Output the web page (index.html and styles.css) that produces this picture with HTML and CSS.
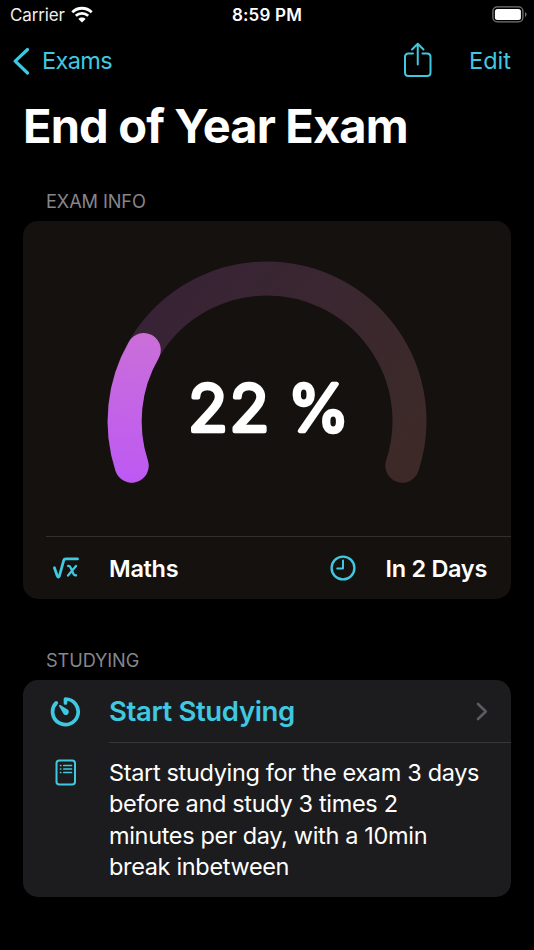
FILE: index.html
```html
<!DOCTYPE html>
<html lang="en">
<head>
<meta charset="utf-8">
<title>End of Year Exam</title>
<link rel="stylesheet" href="styles.css">
</head>
<body>
<header class="status">
  <div class="carrier"><span>Carrier</span>
    <svg width="22" height="17" viewBox="0 0 22 17" fill="none" stroke="#fff" stroke-width="2.8"><path d="M1.300 6.200C6.800.9 15.200.9 20.700 6.200M4.800 9.800c3.500-3.200 8.900-3.200 12.400 0"/><path fill="#fff" stroke="none" d="M7.400 12.900c2-1.800 5.200-1.800 7.200 0L11 16.500z"/></svg>
  </div>
  <span class="time">8:59 PM</span>
  <svg class="battery" width="35" height="17" viewBox="0 0 35 17"><rect x=".9" y=".9" width="30" height="15" rx="4.300" fill="none" stroke="#77777a" stroke-width="1.300"/><rect x="2.900" y="2.900" width="26" height="11" rx="2.500" fill="#fff"/><path d="M33 6v5q1.500-.7 1.500-2.500T33 6z" fill="#77777a"/></svg>
</header>
<nav class="nav">
  <a class="back"><svg width="18" height="28" viewBox="0 0 18 28" fill="none" stroke="currentColor" stroke-width="3.200" stroke-linecap="round" stroke-linejoin="round"><path d="M16.500 2.500 4.200 14.200 16.500 26"/></svg><span>Exams</span></a>
  <svg class="share" width="30" height="36" viewBox="0 0 30 36" fill="none" stroke="currentColor" stroke-width="2" stroke-linecap="round" stroke-linejoin="round"><path d="M10 11.500H5.500Q2 11.500 2 15V30.500Q2 34 5.500 34H24Q27.500 34 27.500 30.500V15Q27.500 11.500 24 11.500H19.500M14.750 22.500V2M9 7.500 14.750 1.800 20.500 7.500"/></svg>
  <a class="edit">Edit</a>
</nav>
<main>
  <h1>End of Year Exam</h1>
  <h2>EXAM INFO</h2>
  <section class="card info">
    <svg class="gauge" width="488" height="315" viewBox="23 221 488 315">
      <defs>
        <linearGradient id="track" gradientUnits="userSpaceOnUse" x1="130" y1="300" x2="410" y2="480"><stop stop-color="#372236"/><stop offset=".5" stop-color="#3a2730"/><stop offset="1" stop-color="#3d2a27"/></linearGradient>
        <linearGradient id="value" gradientUnits="userSpaceOnUse" x1="125" y1="482" x2="150" y2="334"><stop stop-color="#bd59f3"/><stop offset="1" stop-color="#ca6fd9"/></linearGradient>
      </defs>
      <g fill="none" stroke-width="34" stroke-linecap="round">
        <path stroke="url(#track)" d="M131.700 465.700A142.500 142.500 0 1 1 402.300 465.700"/>
        <path stroke="url(#value)" d="M131.700 465.700A142.500 142.500 0 0 1 143.800 350"/>
      </g>
      <text class="percent" x="188" y="430.500">22<tspan dx="-3"> %</tspan></text>
    </svg>
    <div class="facts">
      <svg class="root" width="28" height="24" viewBox="0 0 28 24" fill="none" stroke="currentColor" stroke-linecap="round" stroke-linejoin="round"><path stroke-width="2.800" d="M2.400 11.700 5.300 20Q6.300 22.300 7.400 20L11.700 4.300Q12.100 2.900 13.800 2.900H25.500"/><path stroke-width="2.300" d="M16 10Q17.500 9.500 18.500 11.500L21.500 18Q22.500 19.800 24 19.300M24 10 16 19.500"/></svg>
      <span class="subject">Maths</span>
      <svg class="clock" width="26" height="26" viewBox="0 0 26 26" fill="none" stroke="currentColor"><circle cx="13" cy="13" r="11.400" stroke-width="2.400"/><path stroke-width="2" stroke-linecap="round" stroke-linejoin="round" d="M13 5.500V13.500H7.200"/></svg>
      <span class="due">In 2 Days</span>
    </div>
  </section>
  <h2 class="second">STUDYING</h2>
  <section class="card study">
    <div class="start">
      <svg class="timer" width="31" height="31" viewBox="0 0 31 31" fill="none" stroke="currentColor" stroke-width="3.700" stroke-linecap="round" stroke-linejoin="round"><path d="M15.500 7V3A12.800 12.800 0 1 1 6.200 6.900"/><path fill="currentColor" stroke="none" d="M9.500 9.100Q8.700 9.500 9.100 10.200L13 17A3 3 0 1 0 17.600 13.600L10.300 9Q9.900 8.800 9.500 9.100z"/></svg>
      <span class="start-label">Start Studying</span>
      <svg class="chevron" width="12" height="19" viewBox="0 0 12 19" fill="none" stroke="#5b5b60" stroke-width="2.600" stroke-linecap="round" stroke-linejoin="round"><path d="M2 2 9.800 9.500 2 17"/></svg>
    </div>
    <div class="plan">
      <svg class="note" width="22" height="27" viewBox="0 0 22 27" fill="none" stroke="currentColor" stroke-linecap="round"><rect x="1.500" y="1.500" width="18.500" height="24" rx="2.800" stroke-width="2"/><path stroke-width="1.700" d="M8.800 6.500H16.500M8.800 10H16.500M8.800 13.500H16.500M5.500 6.500H5.800M5.500 10H5.800M5.500 13.500H5.800"/></svg>
      <p>Start studying for the exam 3 days<br>before and study 3 times 2<br>minutes per day, with a 10min<br>break inbetween</p>
    </div>
  </section>
</main>
</body>
</html>
```

FILE: styles.css
```css
* { box-sizing: border-box; }
body { margin: 0; width: 534px; height: 950px; overflow: hidden; background: #000; color: #fff; font-family: Inter, sans-serif; }
svg { display: block; flex: none; }
span, a, h1, h2, p { white-space: nowrap; }
.status { display: grid; grid-template-columns: 1fr auto 1fr; height: 30px; padding: 0 10px; align-items: center; font-size: 17px; line-height: 30px; }
.carrier { display: flex; gap: 7px; align-items: center; color: #eee; letter-spacing: -.15px; }
.carrier svg { margin: -2px 0 0 -1px; }
.time { font-weight: 600; letter-spacing: .2px; }
.battery { justify-self: end; margin: -2px -3px 0 0; }
.nav { display: flex; align-items: center; height: 61px; padding: 0 23px 0 11px; color: #40c8e0; font-size: 23.500px; line-height: 30px; }
.back { display: flex; gap: 13px; align-items: center; letter-spacing: -.65px; }
.share { margin: -1px 36px 0 auto; }
main { padding: 0 23px; }
h1 { margin: 7px 0 0; height: 56px; font-size: 47px; line-height: 56px; font-weight: 700; letter-spacing: -.85px; }
h2 { margin: 37px 0 0 23px; height: 30px; font-size: 18.200px; line-height: 20px; font-weight: 400; letter-spacing: -.1px; color: #86868b; }
h2.second { margin-top: 51px; }
.card { border-radius: 15px; overflow: hidden; }
.info { height: 378px; background: #14110e; }
.percent { font-size: 65px; font-weight: 300; letter-spacing: 1.600px; fill: #fff; stroke: #fff; stroke-width: 4.500px; stroke-linejoin: round; }
.facts { display: flex; align-items: center; margin-left: 23px; height: 63px; padding-right: 24px; border-top: 1px solid #322f2d; font-size: 23.500px; font-weight: 600; letter-spacing: -.3px; }
.root, .clock { color: #40c8e0; }
.root { margin-left: 6px; }
.subject { margin-left: 29px; }
.clock { margin-left: auto; }
.due { margin-left: 30px; }
.study { height: 217px; background: #1c1c1e; }
.start, .plan { display: grid; grid-template-columns: 86px 1fr auto; }
.start { height: 62px; align-items: center; color: #40c8e0; }
.timer { margin: 1px 0 0 27px; }
.start-label { font-size: 27.500px; font-weight: 600; letter-spacing: -.35px; }
.chevron { margin-right: 23px; }
.plan { position: relative; padding-top: 15px; }
.plan::before { content: ""; position: absolute; left: 86px; right: 0; top: 0; height: 1px; background: #363638; }
.note { margin: 2px 0 0 32px; color: #40c8e0; }
p { margin: 0; font-size: 23.500px; line-height: 31.300px; letter-spacing: -.34px; }
```
